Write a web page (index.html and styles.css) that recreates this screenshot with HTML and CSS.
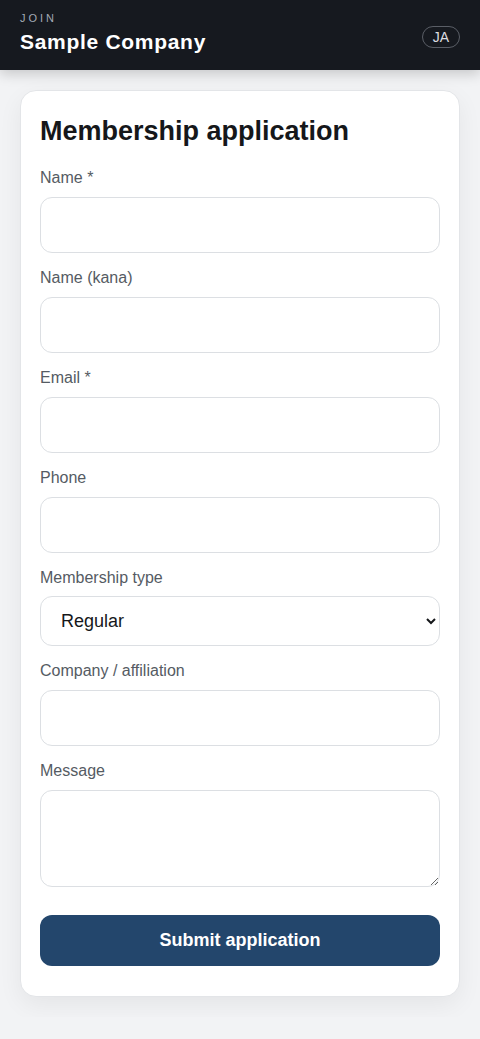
FILE: index.html
```html
<!DOCTYPE html>
<html lang="en">
<head>
    <meta charset="UTF-8">
    <meta name="viewport" content="width=device-width, initial-scale=1.0">
    <title>Join - Sample Company</title>
    <link rel="stylesheet" href="styles.css">
</head>
<body>
    <header class="topbar">
        <div class="brand">
            <div class="eyebrow">JOIN</div>
            <div class="company">Sample Company</div>
        </div>
        <button class="lang-toggle">JA</button>
    </header>

    <main class="page">
        <form class="card">
            <h1>Membership application</h1>

            <div class="field">
                <label for="name">Name *</label>
                <input type="text" id="name">
            </div>
            <div class="field">
                <label for="kana">Name (kana)</label>
                <input type="text" id="kana">
            </div>
            <div class="field">
                <label for="email">Email *</label>
                <input type="email" id="email">
            </div>
            <div class="field">
                <label for="phone">Phone</label>
                <input type="tel" id="phone">
            </div>
            <div class="field select-field">
                <label for="type">Membership type</label>
                <select id="type">
                    <option>Regular</option>
                    <option>Associate</option>
                    <option>Student</option>
                </select>
            </div>
            <div class="field">
                <label for="company">Company / affiliation</label>
                <input type="text" id="company">
            </div>
            <div class="field">
                <label for="message">Message</label>
                <textarea id="message"></textarea>
            </div>

            <button type="submit" class="submit">Submit application</button>
        </form>
    </main>
</body>
</html>
```

FILE: styles.css
```css
* {
    box-sizing: border-box;
}
body {
    font-family: "Liberation Sans", Arial, sans-serif;
    margin: 0;
    background-color: #f2f3f5;
    color: #15171a;
}
.topbar {
    display: flex;
    justify-content: space-between;
    align-items: center;
    height: 70px;
    padding: 0 20px;
    background-color: #16191f;
    box-shadow: 0 4px 12px rgba(0, 0, 0, 0.18);
}
.brand {
    display: flex;
    flex-direction: column;
    gap: 6px;
    padding-bottom: 4px;
}
.eyebrow {
    font-size: 11px;
    letter-spacing: 3px;
    color: #a3a9b5;
}
.company {
    font-size: 21px;
    font-weight: bold;
    letter-spacing: 0.7px;
    color: #ffffff;
}
.lang-toggle {
    font-family: inherit;
    font-size: 14px;
    color: #dcdde0;
    background: transparent;
    border: 1px solid #5a5e66;
    border-radius: 11px;
    height: 22px;
    padding: 0 10px;
    margin-top: 3px;
}
.page {
    padding: 20px;
}
.card {
    display: flex;
    flex-direction: column;
    gap: 16px;
    background-color: #ffffff;
    border: 1px solid #e3e5e8;
    border-radius: 16px;
    padding: 25px 19px 30px;
    box-shadow: 0 8px 24px rgba(0, 0, 0, 0.06);
}
h1 {
    margin: 0 0 6px;
    font-size: 27px;
    color: #15171a;
}
.field {
    display: flex;
    flex-direction: column;
    gap: 10px;
}
.select-field {
    gap: 9px;
}
.field label {
    font-size: 16px;
    color: #555b63;
}
.field input,
.field select,
.field textarea {
    width: 100%;
    font-family: inherit;
    font-size: 18px;
    color: #15171a;
    background-color: #ffffff;
    border: 1px solid #dcdfe3;
    border-radius: 12px;
}
.field input {
    height: 56px;
    padding: 0 16px;
}
.field select {
    height: 50px;
    padding: 0 16px;
}
.field textarea {
    height: 97px;
    padding: 12px 16px;
    display: block;
}
.submit {
    margin-top: 12px;
    height: 51px;
    font-family: inherit;
    font-size: 18px;
    font-weight: bold;
    color: #ffffff;
    background-color: #23466c;
    border: none;
    border-radius: 12px;
    cursor: pointer;
}
```
